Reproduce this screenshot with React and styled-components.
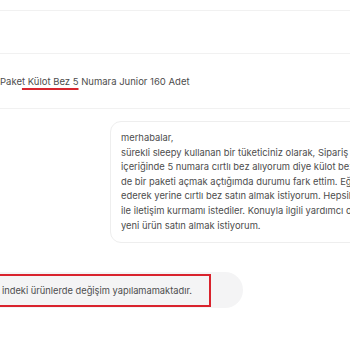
import React from "react";
import styled, { createGlobalStyle } from "styled-components";

const Global = createGlobalStyle`
  html, body { margin: 0; padding: 0; background: #fff; overflow: hidden; }
  body { font-family: Inter, "Noto Sans", sans-serif; color: #4a4a4a; }
`;

const Page = styled.div`
  width: 350px;
  height: 350px;
  overflow: hidden;
  display: flex;
  flex-direction: column;
`;

const Band = styled.div`
  height: ${(p) => p.$h}px;
  flex: none;
  border-bottom: 1px solid #f1f1f1;
  box-sizing: border-box;
`;

const ProductRow = styled.div`
  height: 55px;
  flex: none;
  border-bottom: 1px solid #f1f1f1;
  box-sizing: border-box;
  display: flex;
  align-items: center;
  padding-top: 1px;
  font-size: 9.5px;
  color: #4d4d4d;
  white-space: nowrap;
`;

const Marked = styled.span`
  text-decoration: underline;
  text-decoration-color: #d7262f;
  text-decoration-thickness: 1.5px;
  text-underline-offset: 3px;
`;

const Chat = styled.div`
  display: flex;
  flex-direction: column;
  padding-top: 12px;
  gap: 29px;
`;

const OutBubble = styled.div`
  margin-left: 110px;
  width: 320px;
  flex: none;
  box-sizing: border-box;
  border: 1px solid #eeeeee;
  border-radius: 11px;
  padding: 9px 0 9px 10px;
  font-size: 9.4px;
  line-height: 14.6px;
  color: #4d4d4d;
  white-space: pre;
`;

const InRow = styled.div`
  margin-left: -30px;
  width: 273px;
  height: 36px;
  box-sizing: border-box;
  background: #f4f4f5;
  border-radius: 0 18px 18px 0;
  display: flex;
  align-items: center;
`;

const Highlight = styled.div`
  width: 241px;
  height: 33px;
  box-sizing: border-box;
  border: 2px solid #d9232d;
  display: flex;
  align-items: center;
  padding-left: 30px;
  font-size: 9.3px;
  color: #4d4d4d;
  white-space: nowrap;
`;

const message = `merhabalar,
sürekli sleepy kullanan bir tüketiciniz olarak, Sipariş ettiğim
içeriğinde 5 numara cırtlı bez alıyorum diye külot bez
de bir paketi açmak açtığımda durumu fark ettim. Eğer
ederek yerine cırtlı bez satın almak istiyorum. Hepsiburada
ile iletişim kurmamı istediler. Konuyla ilgili yardımcı olursanız
yeni ürün satın almak istiyorum.`;

export default function App() {
  return (
    <Page>
      <Global />
      <Band $h={11} />
      <Band $h={43} />
      <ProductRow>
        <span>
          Pake<Marked>t Külot Bez 5</Marked> Numara Junior 160 Adet
        </span>
      </ProductRow>
      <Chat>
        <OutBubble>{message}</OutBubble>
        <InRow>
          <Highlight>indeki ürünlerde değişim yapılamamaktadır.</Highlight>
        </InRow>
      </Chat>
    </Page>
  );
}
